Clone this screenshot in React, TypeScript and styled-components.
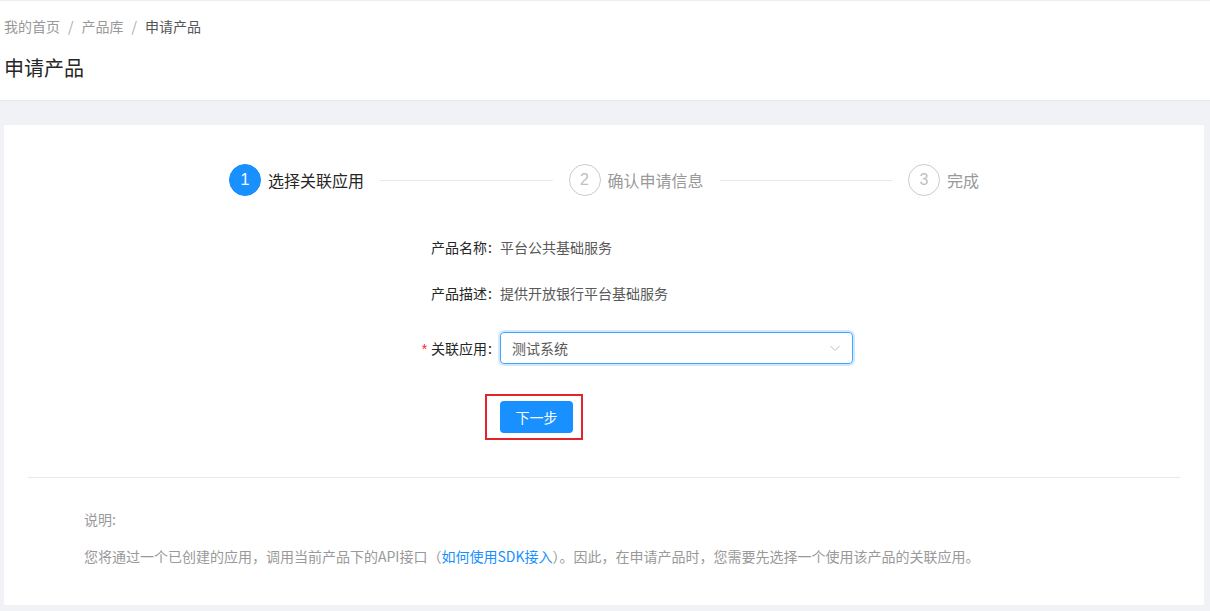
import styled, { createGlobalStyle } from 'styled-components';

const GlobalStyle = createGlobalStyle`
  html, body {
    margin: 0;
    padding: 0;
    background: #f0f2f5;
    font-family: "Noto Sans CJK SC", "Noto Sans", "Liberation Sans", sans-serif;
    -webkit-font-smoothing: antialiased;
  }
`;

const Page = styled.div`
  width: 1210px;
  min-height: 611px;
  background: #f0f2f5;
  border-top: 1px solid #eceef1;
  box-sizing: border-box;
`;

const Header = styled.div`
  background: #fff;
  height: 100px;
  border-bottom: 1px solid #e8e8e8;
  padding: 15px 4px 0;
  box-sizing: border-box;
`;

const Breadcrumb = styled.div`
  display: flex;
  align-items: center;
  font-size: 14px;
  line-height: 20px;
  color: #999;
  .sep {
    margin: 0 8px;
    color: #aaa;
  }
  .current {
    color: #555;
  }
`;

const Title = styled.h1`
  margin: 18px 0 0 0;
  font-size: 20px;
  font-weight: 400;
  line-height: 28px;
  color: #262626;
`;

const Body = styled.div`
  padding: 24px 6px 6px 4px;
`;

const Card = styled.div`
  background: #fff;
  border-radius: 2px;
  padding: 39px 24px 38px;
  height: 480px;
  box-sizing: border-box;
`;

const Steps = styled.div`
  display: flex;
  width: 750px;
  margin: 0 auto;
  align-items: center;
`;

const Step = styled.div<{ $last?: boolean }>`
  display: flex;
  align-items: center;
  flex: ${(p) => (p.$last ? '0 0 auto' : '1 1 0')};
  margin-right: ${(p) => (p.$last ? '0' : '16px')};
`;

const StepIcon = styled.div<{ $active?: boolean }>`
  width: 32px;
  height: 32px;
  border-radius: 50%;
  box-sizing: border-box;
  display: flex;
  align-items: center;
  justify-content: center;
  font-family: "Liberation Sans", Arial, sans-serif;
  font-size: 16px;
  flex: none;
  background: ${(p) => (p.$active ? '#1890ff' : '#fff')};
  border: 1px solid ${(p) => (p.$active ? '#1890ff' : '#ccc')};
  color: ${(p) => (p.$active ? '#fff' : '#c0c0c0')};
`;

const StepTitle = styled.div<{ $active?: boolean }>`
  margin-left: 7px;
  font-size: 16px;
  line-height: 32px;
  color: ${(p) => (p.$active ? '#262626' : '#999')};
  white-space: nowrap;
`;

const StepLine = styled.div`
  flex: 1;
  height: 1px;
  background: #e8e8e8;
  margin-left: 16px;
`;

const Form = styled.div`
  margin-top: 35px;
`;

const FormRow = styled.div<{ $gap: number }>`
  display: flex;
  align-items: center;
  height: 32px;
  margin-bottom: ${(p) => p.$gap}px;
`;

const Label = styled.div`
  width: 472px;
  text-align: right;
  font-size: 14px;
  color: #262626;
  flex: none;
  .req {
    color: #f5222d;
    margin-right: 4px;
    font-family: "Liberation Sans", sans-serif;
  }
  .colon {
    margin: 0 8px 0 1px;
  }
`;

const Value = styled.div`
  font-size: 14px;
  color: #595959;
`;

const Select = styled.div`
  width: 353px;
  height: 32px;
  box-sizing: border-box;
  border: 1px solid #40a9ff;
  border-radius: 4px;
  box-shadow: 0 0 0 2px rgba(24, 144, 255, 0.2);
  display: flex;
  align-items: center;
  justify-content: space-between;
  padding: 0 11px;
  font-size: 14px;
  color: #595959;
`;

const ButtonRow = styled.div`
  display: flex;
  padding-left: 457px;
`;

const Highlight = styled.div`
  border: 2px solid #e3242b;
  padding: 5px 8px 5px 13px;
`;

const PrimaryButton = styled.button`
  width: 73px;
  height: 32px;
  border: none;
  border-radius: 4px;
  background: #1890ff;
  color: #fff;
  font-family: inherit;
  font-size: 14px;
  cursor: pointer;
`;

const Divider = styled.div`
  height: 1px;
  background: #e8e8e8;
  margin-top: 37px;
`;

const Note = styled.div`
  padding: 30px 0 0 56px;
  color: #999;
  font-size: 14px;
  .head {
    line-height: 22px;
  }
  .text {
    margin-top: 15px;
    line-height: 22px;
  }
  a {
    color: #1890ff;
    text-decoration: none;
  }
`;

const Chevron = () => (
  <svg width="12" height="12" viewBox="0 0 12 12" fill="none">
    <path d="M1.5 4l4.5 4.5L10.5 4" stroke="#bfbfbf" strokeWidth="1" />
  </svg>
);

const steps = ['选择关联应用', '确认申请信息', '完成'];

const App = () => {
  return (
    <Page>
      <GlobalStyle />
      <Header>
        <Breadcrumb>
          <span>我的首页</span>
          <span className="sep">/</span>
          <span>产品库</span>
          <span className="sep">/</span>
          <span className="current">申请产品</span>
        </Breadcrumb>
        <Title>申请产品</Title>
      </Header>
      <Body>
        <Card>
          <Steps>
            {steps.map((s, i) => {
              const last = i === steps.length - 1;
              return (
                <Step key={s} $last={last}>
                  <StepIcon $active={i === 0}>{i + 1}</StepIcon>
                  <StepTitle $active={i === 0}>{s}</StepTitle>
                  {!last && <StepLine />}
                </Step>
              );
            })}
          </Steps>
          <Form>
            <FormRow $gap={14}>
              <Label>
                产品名称<span className="colon">:</span>
              </Label>
              <Value>平台公共基础服务</Value>
            </FormRow>
            <FormRow $gap={23}>
              <Label>
                产品描述<span className="colon">:</span>
              </Label>
              <Value>提供开放银行平台基础服务</Value>
            </FormRow>
            <FormRow $gap={30}>
              <Label>
                <span className="req">*</span>关联应用<span className="colon">:</span>
              </Label>
              <Select>
                <span>测试系统</span>
                <Chevron />
              </Select>
            </FormRow>
            <ButtonRow>
              <Highlight>
                <PrimaryButton>下一步</PrimaryButton>
              </Highlight>
            </ButtonRow>
          </Form>
          <Divider />
          <Note>
            <div className="head">说明:</div>
            <div className="text">
              您将通过一个已创建的应用，调用当前产品下的API接口（<a href="#">如何使用SDK接入</a>）。因此，在申请产品时，您需要先选择一个使用该产品的关联应用。
            </div>
          </Note>
        </Card>
      </Body>
    </Page>
  );
};

export default App;
